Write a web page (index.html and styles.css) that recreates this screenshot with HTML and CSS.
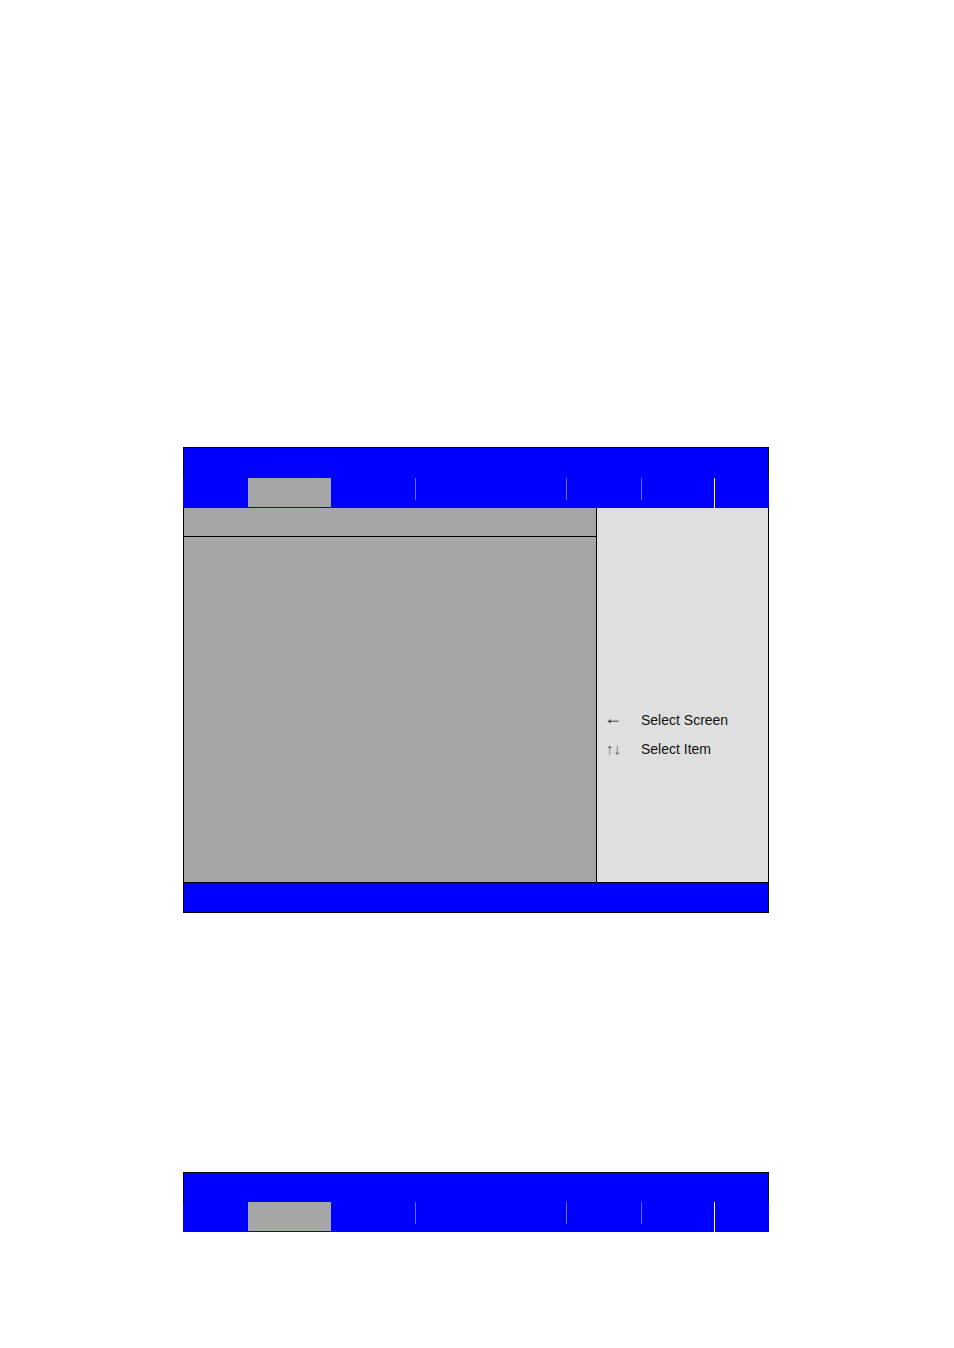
FILE: index.html
```html
<!DOCTYPE html>
<html>
<head>
<meta charset="utf-8">
<link rel="stylesheet" href="styles.css">
</head>
<body>
<div class="page">
  <div class="bios">
    <div class="title-bar"></div>
    <div class="tabs">
      <div class="tab-lead"></div>
      <div class="tab-active"></div>
      <div class="tab w84"></div>
      <div class="sep"></div>
      <div class="tab w150"></div>
      <div class="sep"></div>
      <div class="tab w74"></div>
      <div class="sep"></div>
      <div class="tab w72"></div>
      <div class="sep-white"></div>
      <div class="tab grow"></div>
    </div>
    <div class="body">
      <div class="main">
        <div class="main-head"></div>
        <div class="main-rest"></div>
      </div>
      <div class="help">
        <div class="help-row"><span class="key arrow">&larr;</span><span class="desc">Select Screen</span></div>
        <div class="help-row"><span class="key small">&uarr;&darr;</span><span class="desc">Select Item</span></div>
      </div>
    </div>
    <div class="footer"></div>
  </div>

  <div class="bios second">
    <div class="title-bar short"></div>
    <div class="tabs">
      <div class="tab-lead"></div>
      <div class="tab-active"></div>
      <div class="tab w84"></div>
      <div class="sep"></div>
      <div class="tab w150"></div>
      <div class="sep"></div>
      <div class="tab w74"></div>
      <div class="sep"></div>
      <div class="tab w72"></div>
      <div class="sep-white"></div>
      <div class="tab grow"></div>
    </div>
  </div>
</div>
</body>
</html>
```

FILE: styles.css
```css
html, body {
  margin: 0;
  padding: 0;
  background: #ffffff;
}

.page {
  padding-top: 447px;
  padding-left: 183px;
  font-family: "Liberation Sans", Arial, sans-serif;
}

.bios {
  width: 586px;
}

.second {
  margin-top: 259px;
}

.title-bar {
  height: 31px;
  background: #0000ff;
  border: 1px solid #000;
  border-bottom: none;
  box-sizing: border-box;
  width: 586px;
}

.title-bar.short {
  height: 30px;
}

.tabs {
  display: flex;
  height: 30px;
  background: #0000ff;
  align-items: flex-start;
}

.tab-lead {
  width: 65px;
  height: 30px;
}

.tab-active {
  width: 83px;
  height: 29px;
  background: #a6a6a6;
}

.tab { height: 30px; }
.w84 { width: 84px; }
.w150 { width: 150px; }
.w74 { width: 74px; }
.w72 { width: 72px; }
.grow { flex: 1; }

.sep {
  width: 1px;
  height: 22px;
  background: #6b6bff;
}

.sep-white {
  width: 1px;
  height: 30px;
  background: #ffffff;
}

.body {
  display: flex;
  height: 374px;
  width: 586px;
}

.main {
  width: 413px;
  border-left: 1px solid #000;
  box-sizing: border-box;
  background: #a6a6a6;
  display: flex;
  flex-direction: column;
}

.main-head {
  height: 28px;
  border-bottom: 1px solid #000;
}

.main-rest {
  flex: 1;
}

.help {
  width: 173px;
  box-sizing: border-box;
  border-left: 1px solid #000;
  border-right: 1px solid #000;
  background: #dfdfdf;
  padding-top: 197px;
  padding-left: 9px;
}

.help-row {
  display: flex;
  align-items: center;
  height: 29px;
  font-size: 14px;
  color: #111;
}

.key {
  width: 35px;
  font-family: "Liberation Sans", Arial, sans-serif;
  line-height: 16px;
  color: #222;
}

.key.arrow {
  font-size: 18px;
  width: 37px;
  margin-left: -2px;
  margin-top: -3px;
}

.key.small {
  font-size: 15px;
  color: #555;
}

.desc {
  font-family: "Liberation Sans", Arial, sans-serif;
}

.footer {
  height: 31px;
  box-sizing: border-box;
  background: #0000ff;
  border: 1px solid #000;
  width: 586px;
}
```
